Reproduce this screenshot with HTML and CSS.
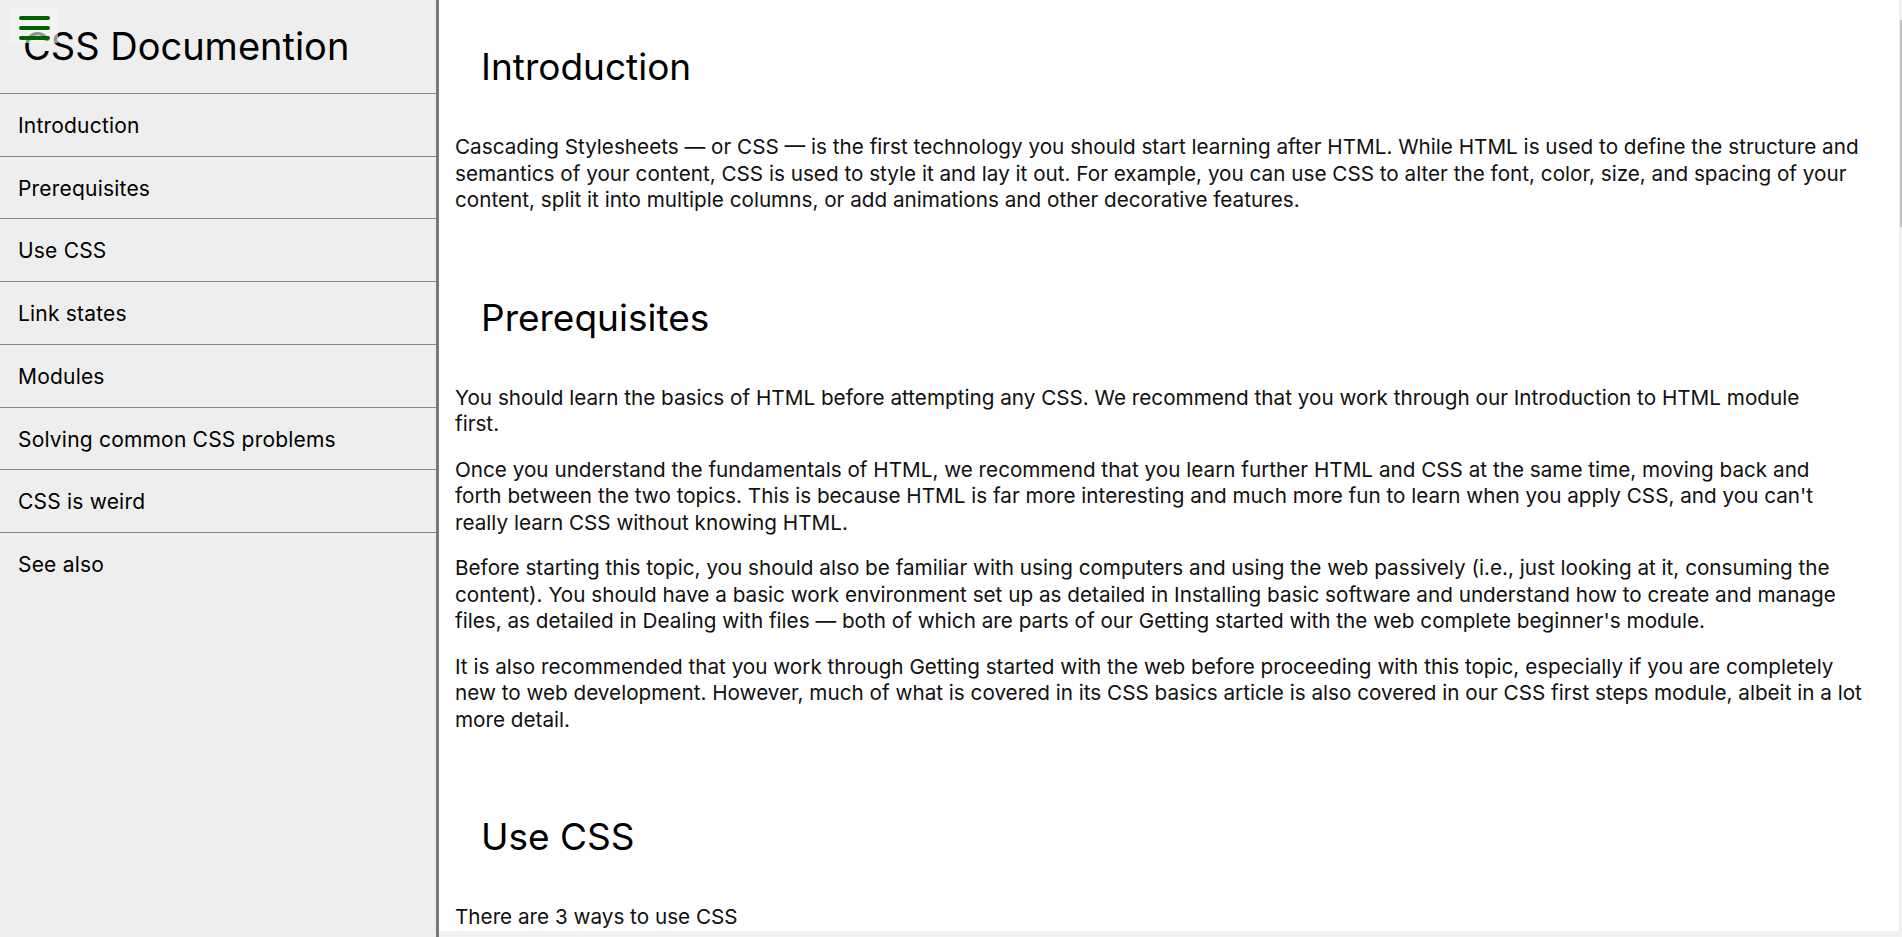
FILE: index.html
```html
<!DOCTYPE html>
<html lang="en">
<head>
<meta charset="utf-8">
<title>CSS Documention</title>
<link rel="stylesheet" href="styles.css">
</head>
<body>
<div class="app">
  <nav class="sidebar" id="navbar">
    <button class="menu-btn" aria-label="Menu">
      <span class="bar"></span><span class="bar"></span><span class="bar"></span>
    </button>
    <header class="sidebar-title">CSS Documention</header>
    <ul class="nav-list">
      <li class="nav-item"><a class="nav-link" href="#Introduction">Introduction</a></li>
      <li class="nav-item"><a class="nav-link" href="#Prerequisites">Prerequisites</a></li>
      <li class="nav-item"><a class="nav-link" href="#Use_CSS">Use CSS</a></li>
      <li class="nav-item"><a class="nav-link" href="#Link_states">Link states</a></li>
      <li class="nav-item"><a class="nav-link" href="#Modules">Modules</a></li>
      <li class="nav-item"><a class="nav-link" href="#Solving">Solving common CSS problems</a></li>
      <li class="nav-item"><a class="nav-link" href="#Weird">CSS is weird</a></li>
      <li class="nav-item nav-item-last"><a class="nav-link" href="#See_also">See also</a></li>
    </ul>
  </nav>
  <div class="main-frame">
    <main class="main-doc" id="main-doc">
      <section class="main-section" id="Introduction">
        <h2 class="section-title">Introduction</h2>
        <p class="text">Cascading Stylesheets — or CSS — is the first technology you should start learning after HTML. While HTML is used to define the structure and<br>semantics of your content, CSS is used to style it and lay it out. For example, you can use CSS to alter the font, color, size, and spacing of your<br>content, split it into multiple columns, or add animations and other decorative features.</p>
      </section>
      <section class="main-section" id="Prerequisites">
        <h2 class="section-title">Prerequisites</h2>
        <p class="text">You should learn the basics of HTML before attempting any CSS. We recommend that you work through our Introduction to HTML module<br>first.</p>
        <p class="text">Once you understand the fundamentals of HTML, we recommend that you learn further HTML and CSS at the same time, moving back and<br>forth between the two topics. This is because HTML is far more interesting and much more fun to learn when you apply CSS, and you can't<br>really learn CSS without knowing HTML.</p>
        <p class="text">Before starting this topic, you should also be familiar with using computers and using the web passively (i.e., just looking at it, consuming the<br>content). You should have a basic work environment set up as detailed in Installing basic software and understand how to create and manage<br>files, as detailed in Dealing with files — both of which are parts of our Getting started with the web complete beginner's module.</p>
        <p class="text">It is also recommended that you work through Getting started with the web before proceeding with this topic, especially if you are completely<br>new to web development. However, much of what is covered in its CSS basics article is also covered in our CSS first steps module, albeit in a lot<br>more detail.</p>
      </section>
      <section class="main-section" id="Use_CSS">
        <h2 class="section-title">Use CSS</h2>
        <p class="text">There are 3 ways to use CSS</p>
      </section>
    </main>
    <div class="scroll-thumb"></div>
  </div>
</div>
</body>
</html>
```

FILE: styles.css
```css
* {
  box-sizing: border-box;
}

html, body {
  margin: 0;
  padding: 0;
  height: 100%;
}

body {
  font-family: Inter, "Open Sans", sans-serif;
  color: #000;
  background: #eee;
  overflow: hidden;
}

.app {
  display: flex;
  height: 100vh;
}

/* ---------- Sidebar ---------- */
.sidebar {
  position: relative;
  flex: 0 0 439px;
  background: #eee;
  border-right: 3px solid #777;
}

.menu-btn {
  position: absolute;
  z-index: 1;
  left: 10px;
  top: 8px;
  width: 48px;
  height: 35px;
  padding: 8px 0 0 9px;
  border: 0;
  background: rgba(246, 246, 246, 0.6);
  display: flex;
  flex-direction: column;
  gap: 6px;
  cursor: pointer;
}

.bar {
  display: block;
  width: 31px;
  height: 4px;
  border-radius: 2px;
  background: #006400;
}

.sidebar-title {
  font-size: 38px;
  line-height: 46px;
  padding: 23px 0 24px 23px;
  border-bottom: 1px solid #888;
}

.nav-list {
  list-style: none;
  margin: 0;
  padding: 0;
}

.nav-item {
  border-bottom: 1px solid #888;
}

.nav-item-last {
  border-bottom: 0;
}

.nav-link {
  display: block;
  padding: 19px 0 17px 18px;
  font-size: 21px;
  line-height: 25.7px;
  letter-spacing: 0.2px;
  color: #000;
  text-decoration: none;
}

/* ---------- Main ---------- */
.main-frame {
  position: relative;
  flex: 1;
  background: #f1f1f1;
  padding: 0 3px 6px 0;
}

.main-doc {
  height: 100%;
  background: #fff;
  overflow: hidden;
  padding: 0 4px 0 16px;
}

.main-section {
  padding-top: 45px;
}

.main-section + .main-section {
  margin-top: 37px;
}

.section-title {
  margin: 0 0 45px;
  padding-left: 26px;
  font-size: 37px;
  line-height: 44px;
  font-weight: 400;
}

.text {
  margin: 0 0 19px;
  font-size: 20.7px;
  line-height: 26.5px;
  color: #111;
  white-space: nowrap;
}

.main-section:last-child .text:last-child {
  margin-bottom: 0;
}

.scroll-thumb {
  position: absolute;
  right: 0;
  top: 20px;
  width: 2px;
  height: 207px;
  background: #c1c1c1;
}
```
